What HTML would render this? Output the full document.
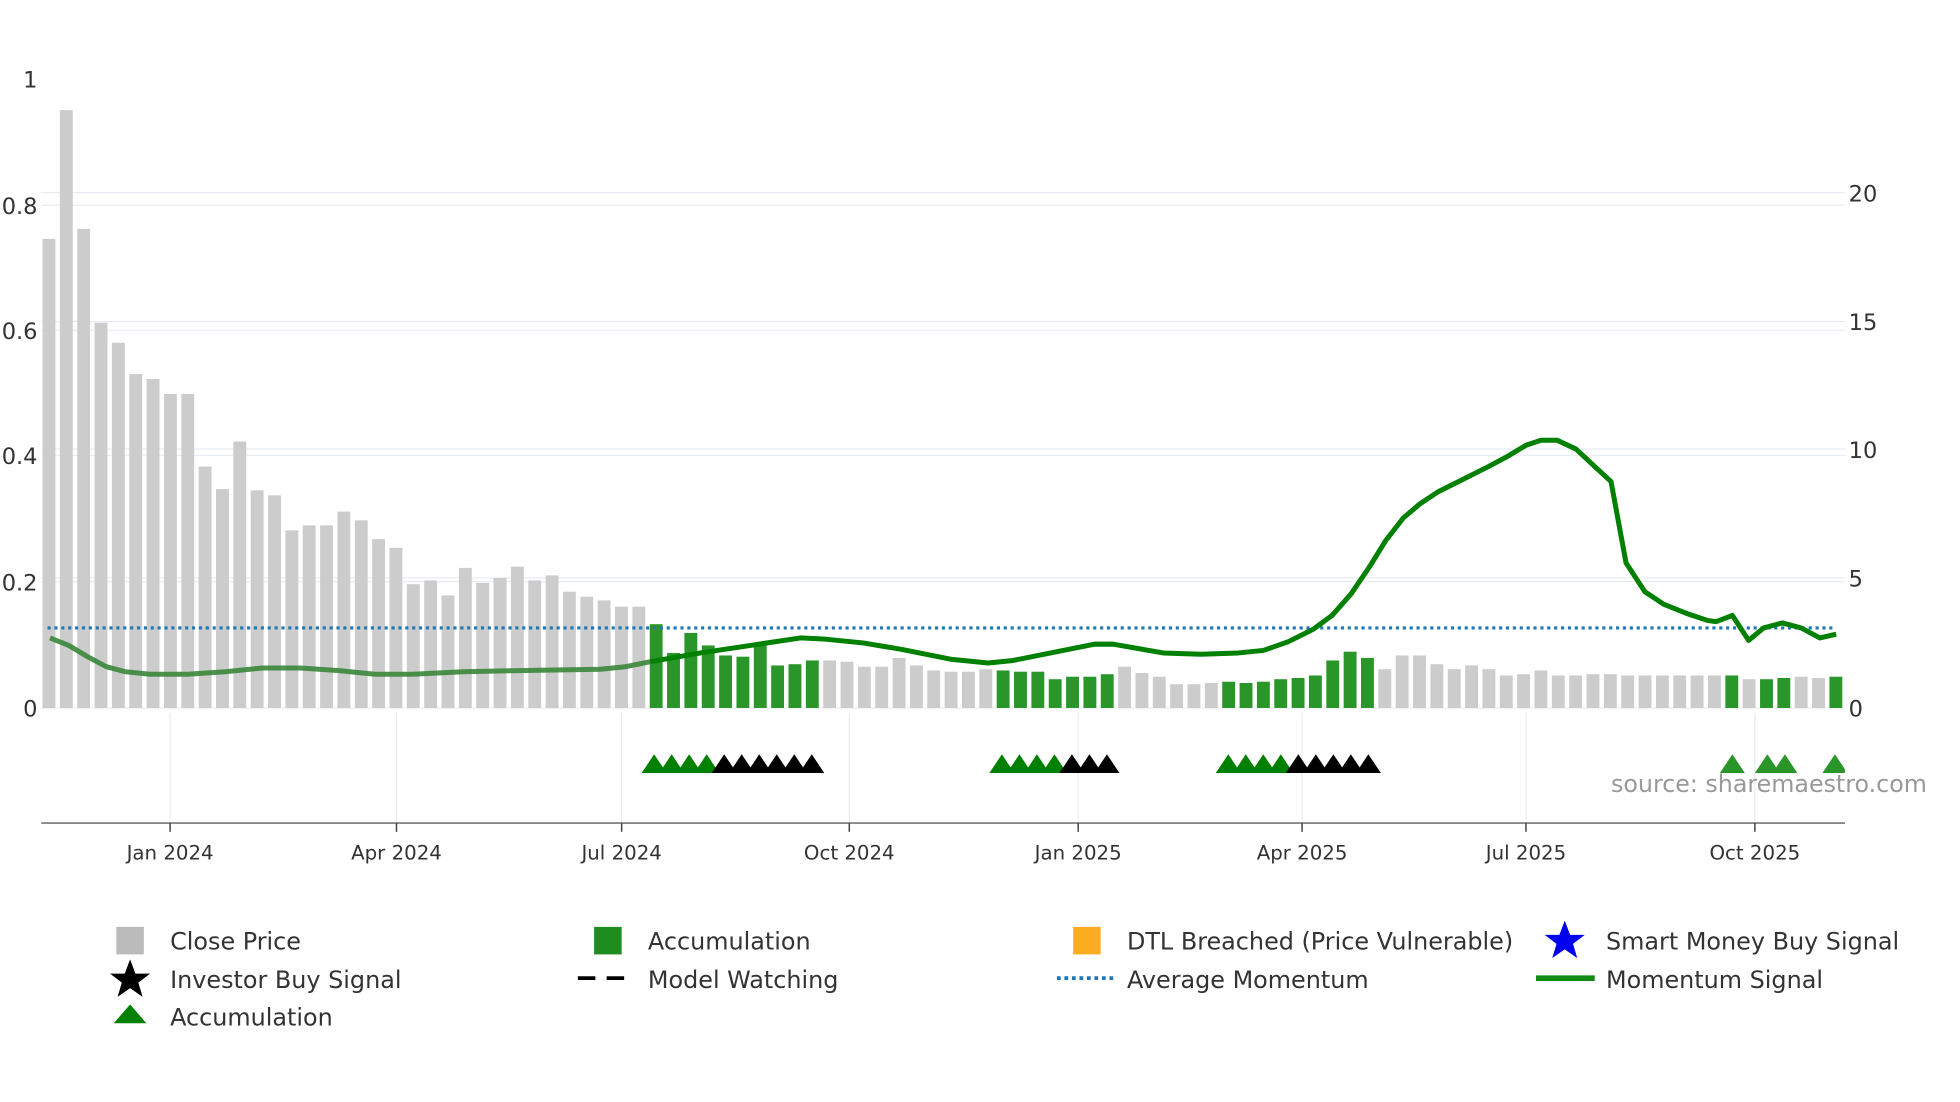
<!DOCTYPE html>
<html><head><meta charset="utf-8"><style>
html,body{margin:0;padding:0;background:#fff;width:1960px;height:1102px;overflow:hidden}
svg{display:block}
text{font-family:"DejaVu Sans","Liberation Sans",sans-serif}
</style></head><body>
<svg id="s" width="1960" height="1102" viewBox="0 0 1567 881" preserveAspectRatio="none" xmlns="http://www.w3.org/2000/svg">
<defs><clipPath id="c"><rect x="30" y="590" width="1445" height="40"/></clipPath></defs>
<g stroke="#e8ecf2" stroke-width="1">
<line x1="33" y1="154" x2="1475" y2="154"/><line x1="33" y1="164" x2="1475" y2="164"/>
<line x1="33" y1="257" x2="1475" y2="257"/><line x1="33" y1="264" x2="1475" y2="264"/>
<line x1="33" y1="359" x2="1475" y2="359"/><line x1="33" y1="364" x2="1475" y2="364"/>
<line x1="33" y1="462" x2="1475" y2="462"/><line x1="33" y1="465" x2="1475" y2="465"/>
<line x1="33" y1="566" x2="1475" y2="566"/>
<line x1="136" y1="570" x2="136" y2="658"/><line x1="317" y1="570" x2="317" y2="658"/>
<line x1="497" y1="570" x2="497" y2="658"/><line x1="679" y1="570" x2="679" y2="658"/>
<line x1="862" y1="570" x2="862" y2="658"/><line x1="1041" y1="570" x2="1041" y2="658"/>
<line x1="1220" y1="570" x2="1220" y2="658"/><line x1="1403" y1="570" x2="1403" y2="658"/>
</g>
<g id="bars"></g>
<line x1="38" y1="502" x2="1468" y2="502" stroke="#1f77b4" stroke-width="2.5" stroke-dasharray="2.5 3"/>
<polyline id="m1" fill="none" stroke="#3a863a" stroke-width="4" stroke-opacity="0.9" stroke-linejoin="round"/>
<polyline id="m2" fill="none" stroke="#008000" stroke-width="4" stroke-linejoin="round"/>
<g id="tri" clip-path="url(#c)"></g>
<line x1="33" y1="658" x2="1475" y2="658" stroke="#888" stroke-width="1.5"/>
<g stroke="#444" stroke-width="1.2">
<line x1="136" y1="658" x2="136" y2="665"/><line x1="317" y1="658" x2="317" y2="665"/><line x1="497" y1="658" x2="497" y2="665"/><line x1="679" y1="658" x2="679" y2="665"/><line x1="862" y1="658" x2="862" y2="665"/><line x1="1041" y1="658" x2="1041" y2="665"/><line x1="1220" y1="658" x2="1220" y2="665"/><line x1="1403" y1="658" x2="1403" y2="665"/>
</g>
<g fill="#333" font-size="15.8" text-anchor="middle">
<text x="136" y="687">Jan 2024</text><text x="317" y="687">Apr 2024</text><text x="497" y="687">Jul 2024</text><text x="679" y="687">Oct 2024</text><text x="862" y="687">Jan 2025</text><text x="1041" y="687">Apr 2025</text><text x="1220" y="687">Jul 2025</text><text x="1403" y="687">Oct 2025</text>
</g>
<g fill="#333" font-size="18" text-anchor="end">
<text x="30" y="70">1</text><text x="30" y="171">0.8</text><text x="30" y="271">0.6</text><text x="30" y="371">0.4</text><text x="30" y="472">0.2</text><text x="30" y="573">0</text>
</g>
<g fill="#333" font-size="18">
<text x="1478" y="161">20</text><text x="1478" y="264">15</text><text x="1478" y="366">10</text><text x="1478" y="469">5</text><text x="1478" y="573">0</text>
</g>
<text x="1288" y="633" fill="#999" font-size="19">source: sharemaestro.com</text>
<g font-size="19.1" fill="#333">
<rect x="93" y="741" width="22" height="22" fill="#bbb"/><text x="136" y="759">Close Price</text>
<rect x="475" y="741" width="22" height="22" fill="#1e8c1e"/><text x="518" y="759">Accumulation</text>
<rect x="858" y="741" width="22" height="22" fill="#fbac20"/><text x="901" y="759">DTL Breached (Price Vulnerable)</text>
<polygon points="1251,736 1255.3,747.4 1267,747.4 1257.6,754.6 1261,766 1251,759 1241,766 1244.4,754.6 1235,747.4 1246.7,747.4" fill="#0000ee"/><text x="1284" y="759">Smart Money Buy Signal</text>
<polygon points="104,767 108.3,778.4 120,778.4 110.6,785.6 114,797 104,790 94,797 97.4,785.6 88,778.4 99.7,778.4" fill="#000"/><text x="136" y="790">Investor Buy Signal</text>
<line x1="462" y1="782" x2="507" y2="782" stroke="#000" stroke-width="3" stroke-dasharray="14 9"/><text x="518" y="790">Model Watching</text>
<line x1="845" y1="782" x2="890" y2="782" stroke="#1f77b4" stroke-width="3" stroke-dasharray="3 3"/><text x="901" y="790">Average Momentum</text>
<line x1="1228" y1="782" x2="1275" y2="782" stroke="#138a13" stroke-width="4.5"/><text x="1284" y="790">Momentum Signal</text>
<polygon points="104,803 117,818 91,818" fill="#008000"/><text x="136" y="820">Accumulation</text>
</g>
</svg>
<script>
var NS="http://www.w3.org/2000/svg";
var tops=[191,88,183,258,274,299,303,315,315,373,391,353,392,396,424,420,420,409,416,431,438,467,464,476,454,466,462,453,464,460,473,477,480,485,485,
499,522,506,516,524,525,514,532,531,528,528,529,533,533,526,532,536,537,537,535,536,537,537,543,541,541,539,533,538,541,547,547,546,545,546,545,543,542,540,528,521,526,535,524,524,531,535,532,535,540,539,536,540,540,539,539,540,540,540,540,540,540,540,543,543,542,541,542,541];
var green={};[[36,45],[56,62],[69,77]].forEach(function(r){for(var i=r[0];i<=r[1];i++)green[i]=1});[98,100,101,104].forEach(function(i){green[i]=1});
var g=document.getElementById("bars");
for(var i=0;i<104;i++){var r=document.createElementNS(NS,"rect");var x=34+13.87*i;r.setAttribute("x",x);r.setAttribute("y",tops[i]);r.setAttribute("width",10.3);r.setAttribute("height",566-tops[i]);r.setAttribute("fill",green[i+1]?"#2a962a":"#cccccc");g.appendChild(r);}
var pts=[[40,510],[55,516],[70,525],[85,533],[100,537],[120,539],[150,539],[180,537],[210,534],[240,534],[270,536],[300,539],[330,539],[370,537],[420,536],[480,535],[500,533],[520,529],[560,522],[600,516],[640,510],[660,511],[690,514],[720,519],[760,527],[790,530],[810,528],[840,522],[875,515],[890,515],[930,522],[960,523],[990,522],[1010,520],[1030,513],[1050,503],[1065,492],[1080,475],[1095,453],[1108,432],[1122,414],[1135,403],[1150,393],[1170,383],[1190,373],[1205,365],[1220,356],[1232,352],[1245,352],[1260,359],[1275,373],[1288,385],[1300,450],[1315,473],[1330,483],[1350,491],[1365,496],[1372,497],[1385,492],[1398,512],[1410,502],[1425,498],[1440,502],[1455,510],[1468,507]];
var a=[],b=[];pts.forEach(function(p){if(p[0]<=520)a.push(p.join(","));if(p[0]>=520)b.push(p.join(","));});
document.getElementById("m1").setAttribute("points",a.join(" "));
document.getElementById("m2").setAttribute("points",b.join(" "));
var tg=document.getElementById("tri");
function tri(x,c){var p=document.createElementNS(NS,"polygon");p.setAttribute("points",(x)+",603 "+(x+10)+",618 "+(x-10)+",618");p.setAttribute("fill",c);tg.appendChild(p);}
[523,537,551,565].forEach(function(x){tri(x,"#008000")});
[579,593,607,621,635,649].forEach(function(x){tri(x,"#000")});
[801,815,829,843].forEach(function(x){tri(x,"#008000")});
[857,871,885].forEach(function(x){tri(x,"#000")});
[982,996,1010,1024].forEach(function(x){tri(x,"#008000")});
[1038,1052,1066,1080,1094].forEach(function(x){tri(x,"#000")});
[1385,1413,1427,1467].forEach(function(x){tri(x,"#2a962a")});
</script>
</body></html>
